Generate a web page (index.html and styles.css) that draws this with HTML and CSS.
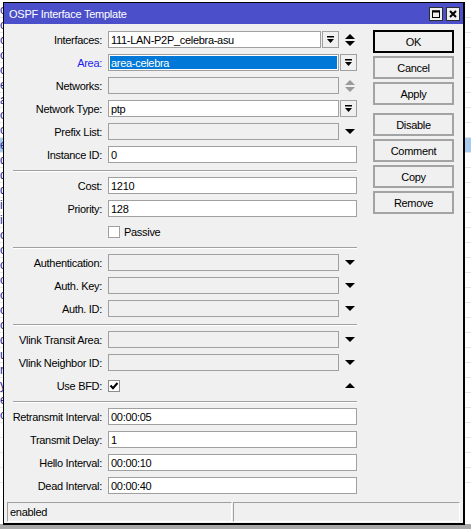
FILE: index.html
```html
<!DOCTYPE html>
<html>
<head>
<meta charset="utf-8">
<link rel="stylesheet" href="styles.css">
</head>
<body>
<div class="bglist">
  <div class="bgrow"><span class="bgcell">c</span></div>
  <div class="bgrow"><span class="bgcell">o</span></div>
  <div class="bgrow"><span class="bgcell">c</span></div>
  <div class="bgrow"><span class="bgcell">o</span></div>
  <div class="bgrow"><span class="bgcell">o</span></div>
  <div class="bgrow"><span class="bgcell">e</span></div>
  <div class="bgrow"><span class="bgcell">a</span></div>
  <div class="bgrow"><span class="bgcell">o</span></div>
  <div class="bgrow"><span class="bgcell">c</span></div>
  <div class="bgrow hl"><span class="bgcell">e</span></div>
  <div class="bgrow"><span class="bgcell">d</span></div>
  <div class="bgrow"><span class="bgcell">d</span></div>
  <div class="bgrow"><span class="bgcell">d</span></div>
  <div class="bgrow"><span class="bgcell">i</span></div>
  <div class="bgrow"><span class="bgcell">i</span></div>
  <div class="bgrow"><span class="bgcell">o</span></div>
  <div class="bgrow"><span class="bgcell">o</span></div>
  <div class="bgrow"><span class="bgcell">o</span></div>
  <div class="bgrow"><span class="bgcell">o</span></div>
  <div class="bgrow"><span class="bgcell">o</span></div>
  <div class="bgrow"><span class="bgcell">o</span></div>
  <div class="bgrow"><span class="bgcell">c</span></div>
  <div class="bgrow"><span class="bgcell">d</span></div>
  <div class="bgrow"><span class="bgcell">u</span></div>
  <div class="bgrow"><span class="bgcell">r</span></div>
  <div class="bgrow"><span class="bgcell">y</span></div>
  <div class="bgrow"><span class="bgcell">e</span></div>
  <div class="bgrow"><span class="bgcell">o</span></div>
  <div class="bgrow"><span class="bgcell"></span></div>
  <div class="bgrow"><span class="bgcell"></span></div>
  <div class="bgrow"><span class="bgcell"></span></div>
  <div class="bgrow"><span class="bgcell"></span></div>
</div>
<div class="bgfoot"></div>

<div class="dialog">
  <div class="titlebar">
    <span class="title">OSPF Interface Template</span>
    <div class="tb-btns">
      <span class="tb-btn"><svg width="8" height="8" viewBox="0 0 8 8"><rect x="0.5" y="1" width="7" height="6.5" fill="none" stroke="#000" stroke-width="1"/><rect x="0" y="0.5" width="8" height="2" fill="#000"/></svg></span>
      <span class="tb-btn"><svg width="8" height="8" viewBox="0 0 8 8"><path d="M1 1 L7 7 M7 1 L1 7" stroke="#000" stroke-width="2" fill="none"/></svg></span>
    </div>
  </div>

  <div class="body">
    <div class="form">
      <div class="section">
        <div class="row"><span class="label">Interfaces:</span>
          <div class="field">
            <span class="input">111-LAN-P2P_celebra-asu</span>
            <span class="dd"><svg width="7" height="7" viewBox="0 0 7 7"><rect x="0" y="0" width="7" height="1.5" fill="#000"/><polygon points="0,3 7,3 3.5,7" fill="#000"/></svg></span>
            <span class="slot"><svg width="10" height="12" viewBox="0 0 10 12"><polygon points="5,0 10,5 0,5" fill="#000"/><polygon points="0,7 10,7 5,12" fill="#000"/></svg></span>
          </div>
        </div>
        <div class="row"><span class="label blue">Area:</span>
          <div class="field">
            <span class="input sel">area-celebra</span>
            <span class="dd"><svg width="7" height="7" viewBox="0 0 7 7"><rect x="0" y="0" width="7" height="1.5" fill="#000"/><polygon points="0,3 7,3 3.5,7" fill="#000"/></svg></span>
          </div>
        </div>
        <div class="row"><span class="label">Networks:</span>
          <div class="field">
            <span class="input dis"></span>
            <span class="slot"><svg width="10" height="12" viewBox="0 0 10 12"><polygon points="5,0 10,5 0,5" fill="#9a9a9a"/><polygon points="0,7 10,7 5,12" fill="#9a9a9a"/></svg></span>
          </div>
        </div>
        <div class="row"><span class="label">Network Type:</span>
          <div class="field">
            <span class="input">ptp</span>
            <span class="dd"><svg width="7" height="7" viewBox="0 0 7 7"><rect x="0" y="0" width="7" height="1.5" fill="#000"/><polygon points="0,3 7,3 3.5,7" fill="#000"/></svg></span>
          </div>
        </div>
        <div class="row"><span class="label">Prefix List:</span>
          <div class="field">
            <span class="input dis"></span>
            <span class="slot"><svg width="10" height="5" viewBox="0 0 10 5"><polygon points="0,0 10,0 5,5" fill="#000"/></svg></span>
          </div>
        </div>
        <div class="row"><span class="label">Instance ID:</span>
          <div class="field"><span class="input">0</span></div>
        </div>
      </div>

      <div class="sep"></div>

      <div class="section">
        <div class="row"><span class="label">Cost:</span>
          <div class="field"><span class="input">1210</span></div>
        </div>
        <div class="row"><span class="label">Priority:</span>
          <div class="field"><span class="input">128</span></div>
        </div>
        <div class="row"><span class="label"></span>
          <div class="field"><span class="check"></span><span class="check-label">Passive</span></div>
        </div>
      </div>

      <div class="sep"></div>

      <div class="section">
        <div class="row"><span class="label">Authentication:</span>
          <div class="field">
            <span class="input dis"></span>
            <span class="slot"><svg width="10" height="5" viewBox="0 0 10 5"><polygon points="0,0 10,0 5,5" fill="#000"/></svg></span>
          </div>
        </div>
        <div class="row"><span class="label">Auth. Key:</span>
          <div class="field">
            <span class="input dis"></span>
            <span class="slot"><svg width="10" height="5" viewBox="0 0 10 5"><polygon points="0,0 10,0 5,5" fill="#000"/></svg></span>
          </div>
        </div>
        <div class="row"><span class="label">Auth. ID:</span>
          <div class="field">
            <span class="input dis"></span>
            <span class="slot"><svg width="10" height="5" viewBox="0 0 10 5"><polygon points="0,0 10,0 5,5" fill="#000"/></svg></span>
          </div>
        </div>
      </div>

      <div class="sep"></div>

      <div class="section">
        <div class="row"><span class="label">Vlink Transit Area:</span>
          <div class="field">
            <span class="input dis"></span>
            <span class="slot"><svg width="10" height="5" viewBox="0 0 10 5"><polygon points="0,0 10,0 5,5" fill="#000"/></svg></span>
          </div>
        </div>
        <div class="row"><span class="label">Vlink Neighbor ID:</span>
          <div class="field">
            <span class="input dis"></span>
            <span class="slot"><svg width="10" height="5" viewBox="0 0 10 5"><polygon points="0,0 10,0 5,5" fill="#000"/></svg></span>
          </div>
        </div>
        <div class="row"><span class="label">Use BFD:</span>
          <div class="field">
            <span class="check on"><svg width="10" height="10" viewBox="0 0 10 10"><path d="M1.5 4.5 L4 7.2 L8.5 2" stroke="#000" stroke-width="2" fill="none"/></svg></span>
            <span class="slot push"><svg width="10" height="5" viewBox="0 0 10 5"><polygon points="5,0 10,5 0,5" fill="#000"/></svg></span>
          </div>
        </div>
      </div>

      <div class="sep"></div>

      <div class="section">
        <div class="row"><span class="label">Retransmit Interval:</span>
          <div class="field"><span class="input">00:00:05</span></div>
        </div>
        <div class="row"><span class="label">Transmit Delay:</span>
          <div class="field"><span class="input">1</span></div>
        </div>
        <div class="row"><span class="label">Hello Interval:</span>
          <div class="field"><span class="input">00:00:10</span></div>
        </div>
        <div class="row"><span class="label">Dead Interval:</span>
          <div class="field"><span class="input">00:00:40</span></div>
        </div>
      </div>
    </div>

    <div class="buttons">
      <span class="btn ok">OK</span>
      <span class="btn">Cancel</span>
      <span class="btn">Apply</span>
      <span class="btn group">Disable</span>
      <span class="btn">Comment</span>
      <span class="btn">Copy</span>
      <span class="btn">Remove</span>
    </div>
  </div>

  <div class="status">
    <div class="pane left">enabled</div>
    <div class="pane right"></div>
  </div>
</div>
</body>
</html>
```
FILE: styles.css
```css
* { box-sizing: border-box; }

body {
  margin: 0;
  width: 471px;
  height: 529px;
  overflow: hidden;
  position: relative;
  background: #fff;
  font-family: "Liberation Sans", Arial, sans-serif;
  font-size: 11px;
  letter-spacing: -0.3px;
  color: #000;
}

/* background window behind the dialog */
.bglist {
  position: absolute;
  left: 0;
  top: 3px;
  width: 471px;
}
.bgrow {
  height: 15px;
  border-bottom: 1px solid #e6e6e6;
  display: flex;
}
.bgrow.hl { background: #a9cbf0; }
.bgcell {
  white-space: nowrap;
  color: #1f2c9e;
  font-size: 12px;
  line-height: 14px;
}
.bgfoot {
  position: absolute;
  left: 0;
  right: 0;
  top: 524px;
  bottom: 0;
  background: #a8a8a8;
}

/* dialog window */
.dialog {
  position: absolute;
  left: 3px;
  top: 2px;
  width: 462px;
  height: 523px;
  border: 1px solid #000;
  border-right-width: 2px;
  border-bottom-width: 2px;
  background: #f0f0f0;
  display: flex;
  flex-direction: column;
}

.titlebar {
  height: 21px;
  flex: none;
  background: #4b4fc9;
  color: #fff;
  display: flex;
  align-items: center;
  padding-left: 5px;
  padding-top: 1px;
}
.title { letter-spacing: -0.25px; }
.tb-btns {
  margin-left: auto;
  display: flex;
  gap: 3px;
  padding-right: 3px;
  margin-top: -1px;
}
.tb-btn {
  width: 14px;
  height: 14px;
  border: 1px solid #2e2e2e;
  background: #efefef;
  display: flex;
  align-items: center;
  justify-content: center;
}

.body {
  display: flex;
  gap: 16px;
  padding: 7px 0 0 9px;
}

.form {
  width: 344px;
  flex: none;
  display: flex;
  flex-direction: column;
}
.section {
  display: flex;
  flex-direction: column;
  gap: 6px;
}
.sep {
  height: 2px;
  border-top: 1px solid #a0a0a0;
  border-bottom: 1px solid #fff;
  margin: 7px 0 5px;
}

.row {
  display: flex;
  align-items: flex-start;
  height: 17px;
}
.label {
  width: 89px;
  flex: none;
  margin-right: 6px;
  display: flex;
  justify-content: flex-end;
  white-space: nowrap;
  height: 17px;
  line-height: 15px;
  padding-top: 2px;
}
.label.blue { color: #1c1cf0; }

.field {
  width: 249px;
  height: 17px;
  display: flex;
  align-items: center;
}
.input {
  flex: 1;
  height: 17px;
  border: 1px solid #a0a0a0;
  background: #fff;
  padding: 1px 0 0 2px;
  line-height: 14px;
  white-space: nowrap;
  overflow: hidden;
}
.input.dis { background: #f0f0f0; }
.input.sel {
  background: #0078d7;
  color: #fff;
  box-shadow: inset 0 0 0 1px #fff;
  padding-left: 2px;
}
.dd {
  width: 17px;
  height: 17px;
  flex: none;
  margin-left: 1px;
  border: 1px solid #a0a0a0;
  background: #f0f0f0;
  display: flex;
  align-items: center;
  justify-content: center;
}
.slot {
  width: 18px;
  height: 17px;
  flex: none;
  display: flex;
  align-items: center;
  justify-content: flex-end;
  padding-right: 2px;
}
.slot.push { margin-left: auto; }

.check {
  width: 12px;
  height: 12px;
  flex: none;
  border: 1px solid #a0a0a0;
  background: #fff;
  display: flex;
  align-items: center;
  justify-content: center;
}
.check.on { border-color: #8c8c8c; }
.check-label {
  margin-left: 4px;
  line-height: 15px;
  padding-top: 1px;
}

.buttons {
  width: 81px;
  flex: none;
  margin-top: -1px;
  display: flex;
  flex-direction: column;
  gap: 3px;
}
.btn {
  height: 23px;
  border: 2px solid #a3a3a3;
  background: #f0f0f0;
  display: flex;
  align-items: center;
  justify-content: center;
  padding-top: 1px;
}
.btn.ok { border-color: #000; }
.btn.group { margin-top: 5px; }

.status {
  margin-top: auto;
  display: flex;
  gap: 1px;
  padding: 0 3px 1px 3px;
}
.pane {
  height: 20px;
  border: 1px solid;
  border-color: #a0a0a0 #fff #fff #a0a0a0;
  padding-left: 2px;
  line-height: 17px;
  padding-top: 1px;
}
.pane.left { width: 225px; }
.pane.right { flex: 1; }
```
